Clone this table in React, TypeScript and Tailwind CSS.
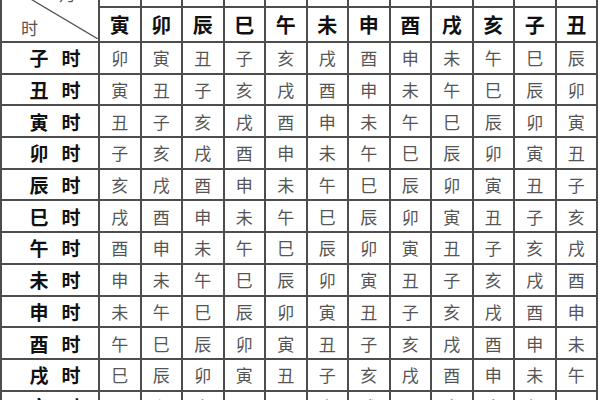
import React from "react";

const header = ["寅", "卯", "辰", "巳", "午", "未", "申", "酉", "戌", "亥", "子", "丑"];

const rows: { label: string; cells: string[] }[] = [
  { label: "子", cells: ["卯", "寅", "丑", "子", "亥", "戌", "酉", "申", "未", "午", "巳", "辰"] },
  { label: "丑", cells: ["寅", "丑", "子", "亥", "戌", "酉", "申", "未", "午", "巳", "辰", "卯"] },
  { label: "寅", cells: ["丑", "子", "亥", "戌", "酉", "申", "未", "午", "巳", "辰", "卯", "寅"] },
  { label: "卯", cells: ["子", "亥", "戌", "酉", "申", "未", "午", "巳", "辰", "卯", "寅", "丑"] },
  { label: "辰", cells: ["亥", "戌", "酉", "申", "未", "午", "巳", "辰", "卯", "寅", "丑", "子"] },
  { label: "巳", cells: ["戌", "酉", "申", "未", "午", "巳", "辰", "卯", "寅", "丑", "子", "亥"] },
  { label: "午", cells: ["酉", "申", "未", "午", "巳", "辰", "卯", "寅", "丑", "子", "亥", "戌"] },
  { label: "未", cells: ["申", "未", "午", "巳", "辰", "卯", "寅", "丑", "子", "亥", "戌", "酉"] },
  { label: "申", cells: ["未", "午", "巳", "辰", "卯", "寅", "丑", "子", "亥", "戌", "酉", "申"] },
  { label: "酉", cells: ["午", "巳", "辰", "卯", "寅", "丑", "子", "亥", "戌", "酉", "申", "未"] },
  { label: "戌", cells: ["巳", "辰", "卯", "寅", "丑", "子", "亥", "戌", "酉", "申", "未", "午"] },
  { label: "亥", cells: ["辰", "卯", "寅", "丑", "子", "亥", "戌", "酉", "申", "未", "午", "巳"] },
];

const font = { fontFamily: '"Noto Sans CJK SC", "Noto Sans", sans-serif' };

export default function App() {
  return (
    <div className="w-[600px] h-[400px] overflow-hidden bg-white" style={font}>
      <div className="-mt-[20px] w-[598px] grid gap-[2px] p-[2px] bg-[#4d4d4d] grid-cols-[96px_repeat(12,39.5px)] grid-rows-[24px_33px_repeat(12,29.7px)]">
        {/* diagonal header cell */}
        <div className="relative row-span-2 bg-white">
          <svg className="absolute inset-0" width="96" height="57" viewBox="0 0 96 57">
            <line x1="0" y1="0" x2="96" y2="57" stroke="#555" strokeWidth="1.3" />
          </svg>
          <span className="absolute left-[57px] top-[3px] text-[17px] leading-none text-[#555]">月</span>
          <span className="absolute left-[19px] top-[37px] text-[17px] leading-none text-[#555]">时</span>
        </div>
        {/* top (month) row, mostly cut off */}
        {header.map((_, i) => (
          <div key={"t" + i} className="bg-white" />
        ))}
        {/* branch header row */}
        {header.map((h, i) => (
          <div
            key={"h" + i}
            className="bg-white flex items-center justify-center text-[20px] font-bold leading-none text-[#111]"
          >
            {h}
          </div>
        ))}
        {rows.map((r) => (
          <React.Fragment key={r.label}>
            <div className="bg-white flex items-center justify-center gap-[13px] pl-[10px] text-[19px] font-bold leading-none text-[#111]">
              <span>{r.label}</span>
              <span>时</span>
            </div>
            {r.cells.map((c, j) => (
              <div
                key={r.label + j}
                className="bg-white flex items-center justify-center text-[17px] leading-none text-[#555]"
              >
                {c}
              </div>
            ))}
          </React.Fragment>
        ))}
      </div>
    </div>
  );
}
